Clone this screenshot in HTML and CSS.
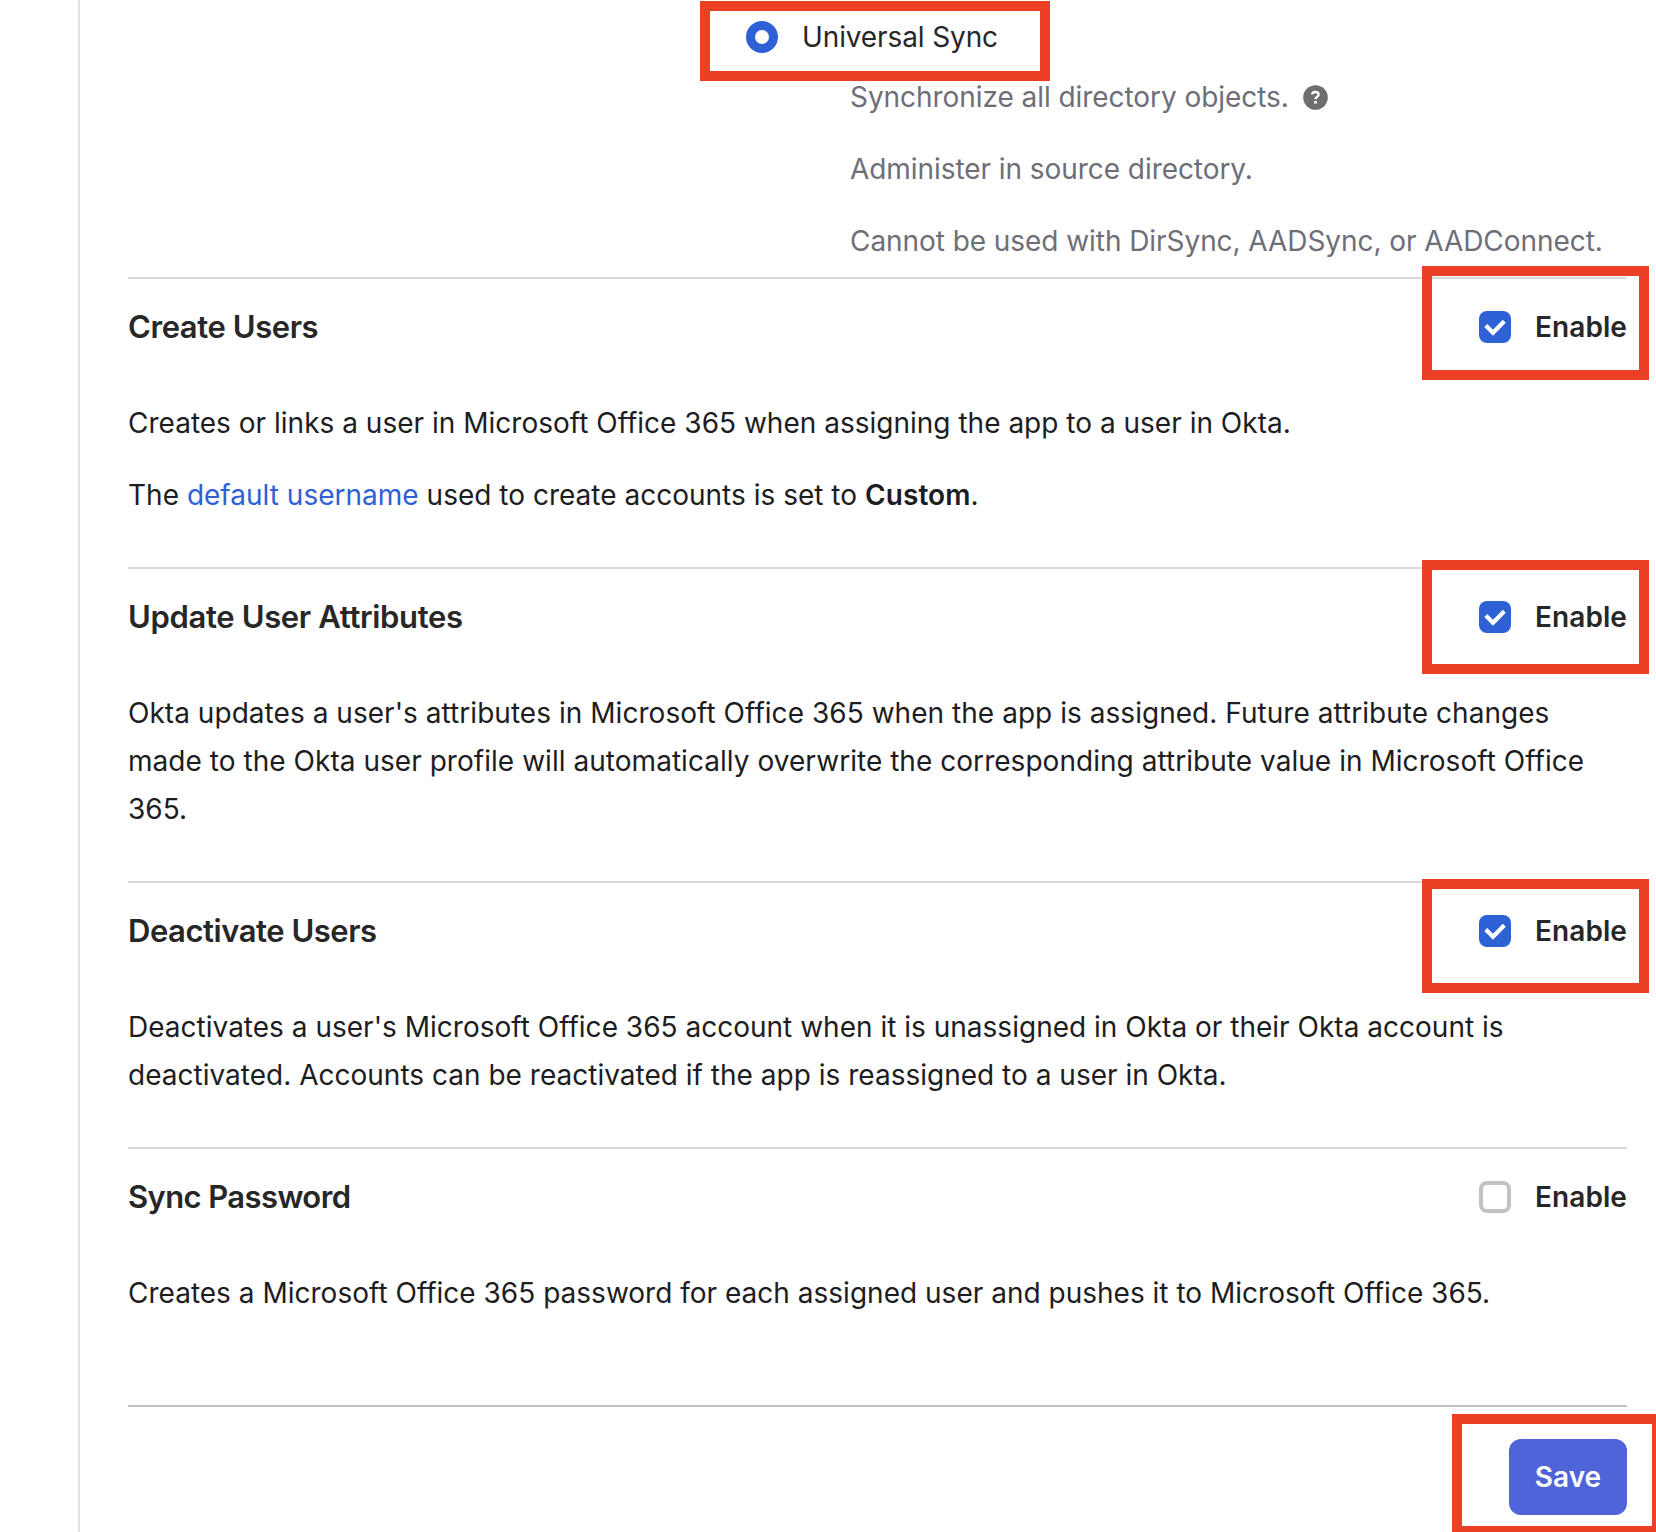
FILE: index.html
```html
<!DOCTYPE html>
<html lang="en">
<head>
<meta charset="utf-8">
<title>Provisioning to App</title>
<link rel="stylesheet" href="styles.css">
</head>
<body>
<main class="panel">
  <div class="sync-option">
    <label class="radio-row"><span class="radio"></span><span class="radio-label">Universal Sync</span></label>
    <div class="hints">
      <p class="hint-first"><span>Synchronize all directory objects.</span>
        <svg class="help" viewBox="0 0 25 25"><circle cx="12.5" cy="12.5" r="12.3" fill="#6e6e6e"/><path d="M9.1 9.4C9.3 7.7 10.5 7 12.3 7c2 0 3.3 .9 3.3 2.6 0 2.3-3.1 2.2-3.1 4.6" fill="none" stroke="#fff" stroke-width="2.3"/><rect x="11.2" y="16" width="2.7" height="2.6" fill="#fff"/></svg>
      </p>
      <p>Administer in source directory.</p>
      <p>Cannot be used with DirSync, AADSync, or AADConnect.</p>
    </div>
  </div>

  <section class="feature">
    <header class="feature-head">
      <h2 class="title title-create">Create Users</h2>
      <label class="toggle"><svg class="box checked" viewBox="0 0 32 32"><path d="M6.8 14.5l7.2 7.3L25.3 10.2" /></svg><span>Enable</span></label>
    </header>
    <div class="feature-body">
      <p>Creates or links a user in Microsoft Office 365 when assigning the app to a user in Okta.</p>
      <p>The <a class="link" href="#">default username</a> used to create accounts is set to <b>Custom</b>.</p>
    </div>
  </section>

  <section class="feature">
    <header class="feature-head">
      <h2 class="title title-update">Update User Attributes</h2>
      <label class="toggle"><svg class="box checked" viewBox="0 0 32 32"><path d="M6.8 14.5l7.2 7.3L25.3 10.2" /></svg><span>Enable</span></label>
    </header>
    <div class="feature-body feature-body-update">
      <p>Okta updates a user's attributes in Microsoft Office 365 when the app is assigned. Future attribute changes<br>made to the Okta user profile will automatically overwrite the corresponding attribute value in Microsoft Office<br>365.</p>
    </div>
  </section>

  <section class="feature">
    <header class="feature-head">
      <h2 class="title title-deactivate">Deactivate Users</h2>
      <label class="toggle"><svg class="box checked" viewBox="0 0 32 32"><path d="M6.8 14.5l7.2 7.3L25.3 10.2" /></svg><span>Enable</span></label>
    </header>
    <div class="feature-body">
      <p>Deactivates a user's Microsoft Office 365 account when it is unassigned in Okta or their Okta account is<br>deactivated. Accounts can be reactivated if the app is reassigned to a user in Okta.</p>
    </div>
  </section>

  <section class="feature feature-last">
    <header class="feature-head">
      <h2 class="title title-sync">Sync Password</h2>
      <label class="toggle"><span class="box empty"></span><span>Enable</span></label>
    </header>
    <div class="feature-body">
      <p>Creates a Microsoft Office 365 password for each assigned user and pushes it to Microsoft Office 365.</p>
    </div>
  </section>

  <footer class="actions"><button class="save">Save</button></footer>
</main>

<div class="mark mark-radio"></div>
<div class="mark mark-create"></div>
<div class="mark mark-update"></div>
<div class="mark mark-deactivate"></div>
<div class="mark mark-save"></div>
</body>
</html>
```

FILE: styles.css
```css
* { box-sizing: border-box; }
html { height: 100%; overflow: hidden; }
body {
  position: relative;
  height: 1532px;
  margin: 0;
  overflow: hidden;
  background: #fff;
  color: #1d1d21;
  font: 400 28px/48px Inter, "Liberation Sans", sans-serif;
  letter-spacing: 0.01px;
}
p, h2 { margin: 0; }
p { white-space: nowrap; }

.panel {
  height: 1532px;
  margin-left: 78px;
  padding: 13px 29px 0 48px;
  border-left: 2px solid #e1e1e1;
}

.sync-option { height: 264px; padding-left: 618px; }
.radio-row { display: flex; align-items: center; gap: 24px; height: 48px; color: #272727; letter-spacing: -0.12px; }
.radio {
  width: 32px;
  height: 32px;
  border: 9.5px solid #2e60d6;
  border-radius: 50%;
  background: #fff;
}
.hints {
  display: flex;
  flex-direction: column;
  gap: 24px;
  padding: 12px 0 0 104px;
  color: #6e6e78;
  letter-spacing: -0.06px;
}
.hint-first { display: flex; align-items: center; gap: 14px; }
.help { width: 25px; height: 25px; }

.feature { padding: 24px 0 48px; border-top: 2px solid #d7d7dc; }
.feature-last { padding-bottom: 88px; }
.feature-head { display: flex; align-items: center; justify-content: space-between; height: 48px; }
.title { font-size: 31px; font-weight: 600; line-height: 48px; color: #272727; letter-spacing: -0.6px; }
.title-create { letter-spacing: -0.42px; }
.title-update { letter-spacing: -0.34px; }
.title-deactivate { letter-spacing: -0.46px; }
.toggle { display: flex; align-items: center; gap: 24px; font-weight: 600; color: #272727; letter-spacing: 0.08px; }
.box { width: 32px; height: 32px; border-radius: 8px; }
.checked { background: #2e60d6; }
.checked path { fill: none; stroke: #fff; stroke-width: 4.2; }
.empty { border: 4px solid #c1c1c8; }
.feature-body { display: flex; flex-direction: column; gap: 24px; padding-top: 48px; }
.feature-body-update { letter-spacing: 0.04px; }
.link { color: #2e60d6; text-decoration: none; }
b { font-weight: 600; letter-spacing: 0.1px; }

.actions { display: flex; justify-content: flex-end; padding-top: 32px; border-top: 2px solid #c1c1c8; }
.save {
  width: 118px;
  height: 76px;
  padding: 0;
  border: 0;
  border-radius: 12px;
  background: #4f64d9;
  color: #fff;
  font: 600 28px/76px Inter, "Liberation Sans", sans-serif;
}

/* Callout frames laid over the form */
.mark { position: absolute; border: 10px solid #eb4026; width: 227px; height: 114px; left: 1422px; }
.mark-radio { left: 700px; top: 1px; width: 350px; height: 80px; }
.mark-create { top: 266px; }
.mark-update { top: 560px; }
.mark-deactivate { top: 879px; }
.mark-save { left: 1452px; top: 1414px; width: 210px; height: 122px; }
```
